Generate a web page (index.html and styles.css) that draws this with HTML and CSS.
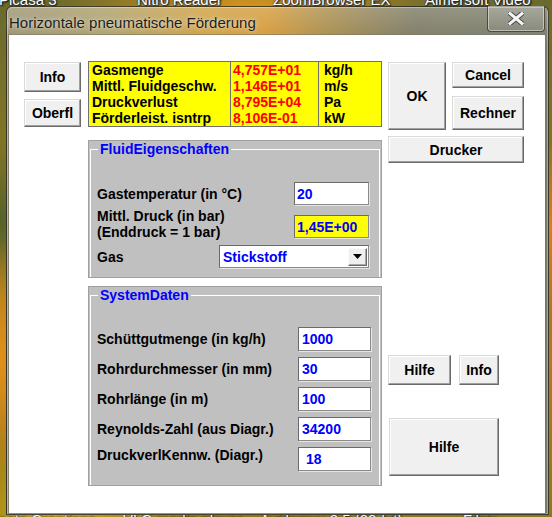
FILE: index.html
```html
<!DOCTYPE html>
<html lang="de">
<head>
<meta charset="utf-8">
<title>Horizontale pneumatische Förderung</title>
<link rel="stylesheet" href="styles.css">
</head>
<body>
<div class="desktop">
  <span class="desk-label top l1">Picasa 3</span>
  <span class="desk-label top l2">Nitro Reader</span>
  <span class="desk-label top l3">ZoomBrowser EX</span>
  <span class="desk-label top l4">Aimersoft Video</span>
  <span class="desk-label bottom b1">noto Creations</span>
  <span class="desk-label bottom b2">VLC media player</span>
  <span class="desk-label bottom b3">Avidemux 2.5 (32-bit)</span>
  <span class="desk-label bottom b4">Filzip</span>

  <div class="window">
    <div class="titlebar">
      <span class="title">Horizontale pneumatische Förderung</span>
      <div class="close">
        <svg width="16" height="13" viewBox="0 0 16 13">
          <path d="M2 1.5 L14 11.5 M14 1.5 L2 11.5" stroke="#4a4a4a" stroke-width="5" stroke-linecap="square"/>
          <path d="M2 1.5 L14 11.5 M14 1.5 L2 11.5" stroke="#f4f4f4" stroke-width="3" stroke-linecap="square"/>
        </svg>
      </div>
    </div>
    <div class="client ui">
      <div class="col-a">
        <button class="btn btn-info">Info</button>
        <button class="btn btn-oberfl">Oberfl</button>
      </div>

      <div class="col-b">
        <div class="results">
          <div class="res-col res-label">
            <div>Gasmenge</div>
            <div>Mittl. Fluidgeschw.</div>
            <div>Druckverlust</div>
            <div>Förderleist. isntrp</div>
          </div>
          <div class="res-col res-value">
            <div>4,757E+01</div>
            <div>1,146E+01</div>
            <div>8,795E+04</div>
            <div>8,106E-01</div>
          </div>
          <div class="res-col res-unit">
            <div>kg/h</div>
            <div>m/s</div>
            <div>Pa</div>
            <div>kW</div>
          </div>
        </div>

        <div class="group group-fluid">
          <fieldset>
            <legend>FluidEigenschaften</legend>
            <div class="row row-temp">
              <span class="lbl">Gastemperatur (in °C)</span>
              <div class="field f-fluid">20</div>
            </div>
            <div class="row row-druck">
              <span class="lbl">Mittl. Druck (in bar)<br>(Enddruck = 1 bar)</span>
              <div class="field f-fluid f-yellow">1,45E+00</div>
            </div>
            <div class="row row-gas">
              <span class="lbl">Gas</span>
              <div class="combo">
                <span>Stickstoff</span>
                <span class="drop">
                  <svg width="9" height="5" viewBox="0 0 9 5"><path d="M0 0 H9 L4.5 5 Z" fill="#000"/></svg>
                </span>
              </div>
            </div>
          </fieldset>
        </div>

        <div class="group group-system">
          <fieldset>
            <legend>SystemDaten</legend>
            <div class="row row-sys first">
              <span class="lbl">Schüttgutmenge (in kg/h)</span>
              <div class="field f-sys">1000</div>
            </div>
            <div class="row row-sys">
              <span class="lbl">Rohrdurchmesser (in mm)</span>
              <div class="field f-sys">30</div>
            </div>
            <div class="row row-sys">
              <span class="lbl">Rohrlänge (in m)</span>
              <div class="field f-sys">100</div>
            </div>
            <div class="row row-sys">
              <span class="lbl">Reynolds-Zahl (aus Diagr.)</span>
              <div class="field f-sys">34200</div>
            </div>
            <div class="row row-sys">
              <span class="lbl lbl-top">DruckverlKennw. (Diagr.)</span>
              <div class="field f-sys f-indent">18</div>
            </div>
          </fieldset>
        </div>
      </div>

      <div class="col-c">
        <div class="top-btns">
          <button class="btn btn-ok">OK</button>
          <button class="btn btn-cancel">Cancel</button>
          <button class="btn btn-rechner">Rechner</button>
        </div>
        <button class="btn btn-drucker">Drucker</button>
        <div class="help-row">
          <button class="btn btn-hilfe">Hilfe</button>
          <button class="btn btn-info2">Info</button>
        </div>
        <button class="btn btn-hilfe-big">Hilfe</button>
      </div>
    </div>
  </div>
</div>
</body>
</html>
```

FILE: styles.css
```css
html, body {
  margin: 0;
  padding: 0;
}

body {
  width: 552px;
  height: 517px;
  overflow: hidden;
  font-family: "Liberation Sans", Arial, sans-serif;
}

.desktop {
  position: relative;
  width: 552px;
  height: 517px;
  overflow: hidden;
  background:
    radial-gradient(ellipse 60px 120px at 0px 360px, #e0901a 0%, rgba(224,144,26,0) 100%),
    radial-gradient(ellipse 40px 90px at 552px 230px, #d9801c 0%, rgba(217,128,28,0) 100%),
    radial-gradient(ellipse 200px 60px at 250px 10px, #d8961e 0%, rgba(216,150,30,0) 100%),
    radial-gradient(ellipse 140px 80px at 60px 517px, #c9a416 0%, rgba(201,164,22,0) 100%),
    radial-gradient(ellipse 60px 80px at 0px 220px, #54622a 0%, rgba(84,98,42,0) 100%),
    linear-gradient(180deg, #6a6a2c 0%, #8b7a22 40%, #b37a1e 70%, #8a7a1c 100%);
}

.desk-label {
  position: absolute;
  color: #fff;
  font-family: "Liberation Sans", Arial, sans-serif;
  font-size: 15px;
  line-height: 17px;
  white-space: nowrap;
  text-shadow: 0 0 2px #0a1a50, 1px 1px 2px #000;
}
.desk-label.top { top: -9px; }
.desk-label.bottom { top: 511px; }
.l1 { left: -1px; }
.l2 { left: 137px; }
.l3 { left: 273px; }
.l4 { left: 425px; }
.b1 { left: -2px; }
.b2 { left: 123px; }
.b3 { left: 260px; }
.b4 { left: 463px; }

/* ---------- window ---------- */
.window {
  position: absolute;
  left: 6px;
  top: 6px;
  width: 543px;
  height: 509px;
  box-sizing: border-box;
  border: 1px solid rgba(30, 30, 20, 0.75);
  border-radius: 6px 6px 0 0;
  padding: 0 3px 1px 2px;
  display: flex;
  flex-direction: column;
  background:
    linear-gradient(180deg, rgba(255,255,255,0.28) 0%, rgba(255,255,255,0.08) 40px),
    linear-gradient(90deg, #8f8660 0%, #a39457 18%, #c8952c 36%, #cf8f22 48%, #9c7f3a 60%, #6e6c52 75%, #6b6e5c 100%);
  box-shadow: inset 0 0 0 1px rgba(255,255,255,0.35);
}

.titlebar {
  height: 28px;
  display: flex;
  align-items: center;
}

.title {
  font-family: "Liberation Sans", Arial, sans-serif;
  font-size: 15px;
  color: #1c1c1c;
  margin-left: 0px;
  margin-top: 2px;
  text-shadow: 0 0 6px rgba(255,255,255,0.7), 0 0 2px rgba(255,255,255,0.5);
}

.close {
  margin-left: auto;
  align-self: flex-start;
  margin-top: -1px;
  width: 58px;
  height: 26px;
  box-sizing: border-box;
  border: 1px solid rgba(60, 55, 40, 0.8);
  border-top: none;
  border-radius: 0 0 4px 4px;
  box-shadow: inset 0 0 0 1px rgba(255,255,255,0.45);
  background: linear-gradient(180deg, rgba(255,255,255,0.18), rgba(255,255,255,0.05));
  display: flex;
  align-items: center;
  justify-content: center;
}

.client {
  flex: 1;
  background: #fff;
  display: flex;
  align-items: flex-start;
  padding: 26px 0 0 15px;
  box-shadow: 0 0 0 1px rgba(120,120,110,0.6);
}

.ui {
  font-family: "Liberation Sans", Arial, sans-serif;
  font-size: 14px;
  font-weight: bold;
  line-height: 16px;
  color: #000;
}

/* ---------- buttons ---------- */
.btn {
  box-sizing: border-box;
  margin: 0;
  padding: 0;
  font: inherit;
  color: #000;
  background: #f0f0f0;
  border: 1px solid;
  border-color: #d9d9d9 #6a6a6a #6a6a6a #d9d9d9;
  box-shadow: inset -1px -1px 0 #a0a0a0, inset 1px 1px 0 #fff;
  display: flex;
  align-items: center;
  justify-content: center;
}

.col-a {
  width: 57px;
  margin-top: 1px;
  display: flex;
  flex-direction: column;
}
.btn-info { height: 30px; }
.btn-oberfl { height: 28px; margin-top: 7px; }

.col-b {
  width: 294px;
  margin-left: 7px;
  display: flex;
  flex-direction: column;
}

.col-c {
  width: 136px;
  margin-left: 6px;
  margin-top: 1px;
  display: flex;
  flex-direction: column;
}

.top-btns {
  display: grid;
  grid-template-columns: 58px 72px;
  grid-template-rows: 26px 34px;
  column-gap: 6px;
  row-gap: 8px;
}
.btn-ok { grid-row: 1 / span 2; }
.btn-drucker { height: 27px; margin-top: 6px; }

.help-row {
  display: flex;
  gap: 8px;
  margin-top: 192px;
}
.btn-hilfe { width: 63px; height: 30px; }
.btn-info2 { width: 40px; height: 30px; }
.btn-hilfe-big {
  width: 110px;
  height: 58px;
  margin-top: 33px;
  margin-left: 1px;
}

/* ---------- results table ---------- */
.results {
  display: flex;
  height: 66px;
  box-sizing: border-box;
  background: #ffff00;
  border: 1px solid #707070;
}
.res-col { box-sizing: border-box; }
.res-label { width: 142px; padding-left: 3px; border-right: 1px solid #707070; }
.res-value { width: 88px; padding-left: 2px; border-right: 1px solid #707070; color: #ff0000; }
.res-unit { flex: 1; padding-left: 5px; }

/* ---------- groups ---------- */
.group {
  box-sizing: border-box;
  background: #c0c0c0;
  border: 1px solid #a0a0a0;
  padding: 0 1px;
}
.group-fluid { height: 138px; margin-top: 13px; }
.group-system { height: 200px; margin-top: 8px; }

fieldset {
  margin: 0;
  min-width: 0;
  height: 100%;
  box-sizing: border-box;
  border: 1px solid #fff;
  border-bottom: none;
  padding: 0 10px 0 6px;
}
.group-system fieldset { padding-right: 8px; }

legend {
  margin-left: 1px;
  padding: 0 2px;
  color: #0000ff;
  line-height: 16px;
}

.row {
  display: flex;
  align-items: center;
  justify-content: space-between;
}

.row-temp { margin-top: 25px; }
.row-druck { margin-top: 3px; align-items: flex-start; }
.row-druck .field { margin-top: 7px; }
.row-gas { margin-top: 5px; }

.row-sys { margin-top: 6px; }
.row-sys.first { margin-top: 24px; }
.lbl-top { align-self: flex-start; }

.field {
  box-sizing: border-box;
  background: #fff;
  color: #0000ff;
  border: 1px solid;
  border-color: #6a6a6a #8a8a8a #8a8a8a #6a6a6a;
  box-shadow: 1px 1px 0 #e6e6e6;
  display: flex;
  align-items: center;
}
.f-fluid { width: 75px; height: 23px; padding-left: 2px; }
.f-yellow { background: #ffff00; }
.f-sys { width: 73px; height: 24px; padding-left: 3px; }
.f-indent { padding-left: 7px; }

.combo {
  box-sizing: border-box;
  width: 150px;
  height: 23px;
  background: #fff;
  color: #0000ff;
  border: 1px solid;
  border-color: #6a6a6a #8a8a8a #8a8a8a #6a6a6a;
  box-shadow: 1px 1px 0 #e6e6e6;
  display: flex;
  align-items: center;
  padding-left: 3px;
  padding-right: 1px;
}
.drop {
  margin-left: auto;
  width: 19px;
  height: 18px;
  box-sizing: border-box;
  background: #efefef;
  border: 1px solid;
  border-color: #fafafa #6a6a6a #6a6a6a #fafafa;
  box-shadow: inset -1px -1px 0 #a8a8a8;
  display: flex;
  align-items: center;
  justify-content: center;
}
```
